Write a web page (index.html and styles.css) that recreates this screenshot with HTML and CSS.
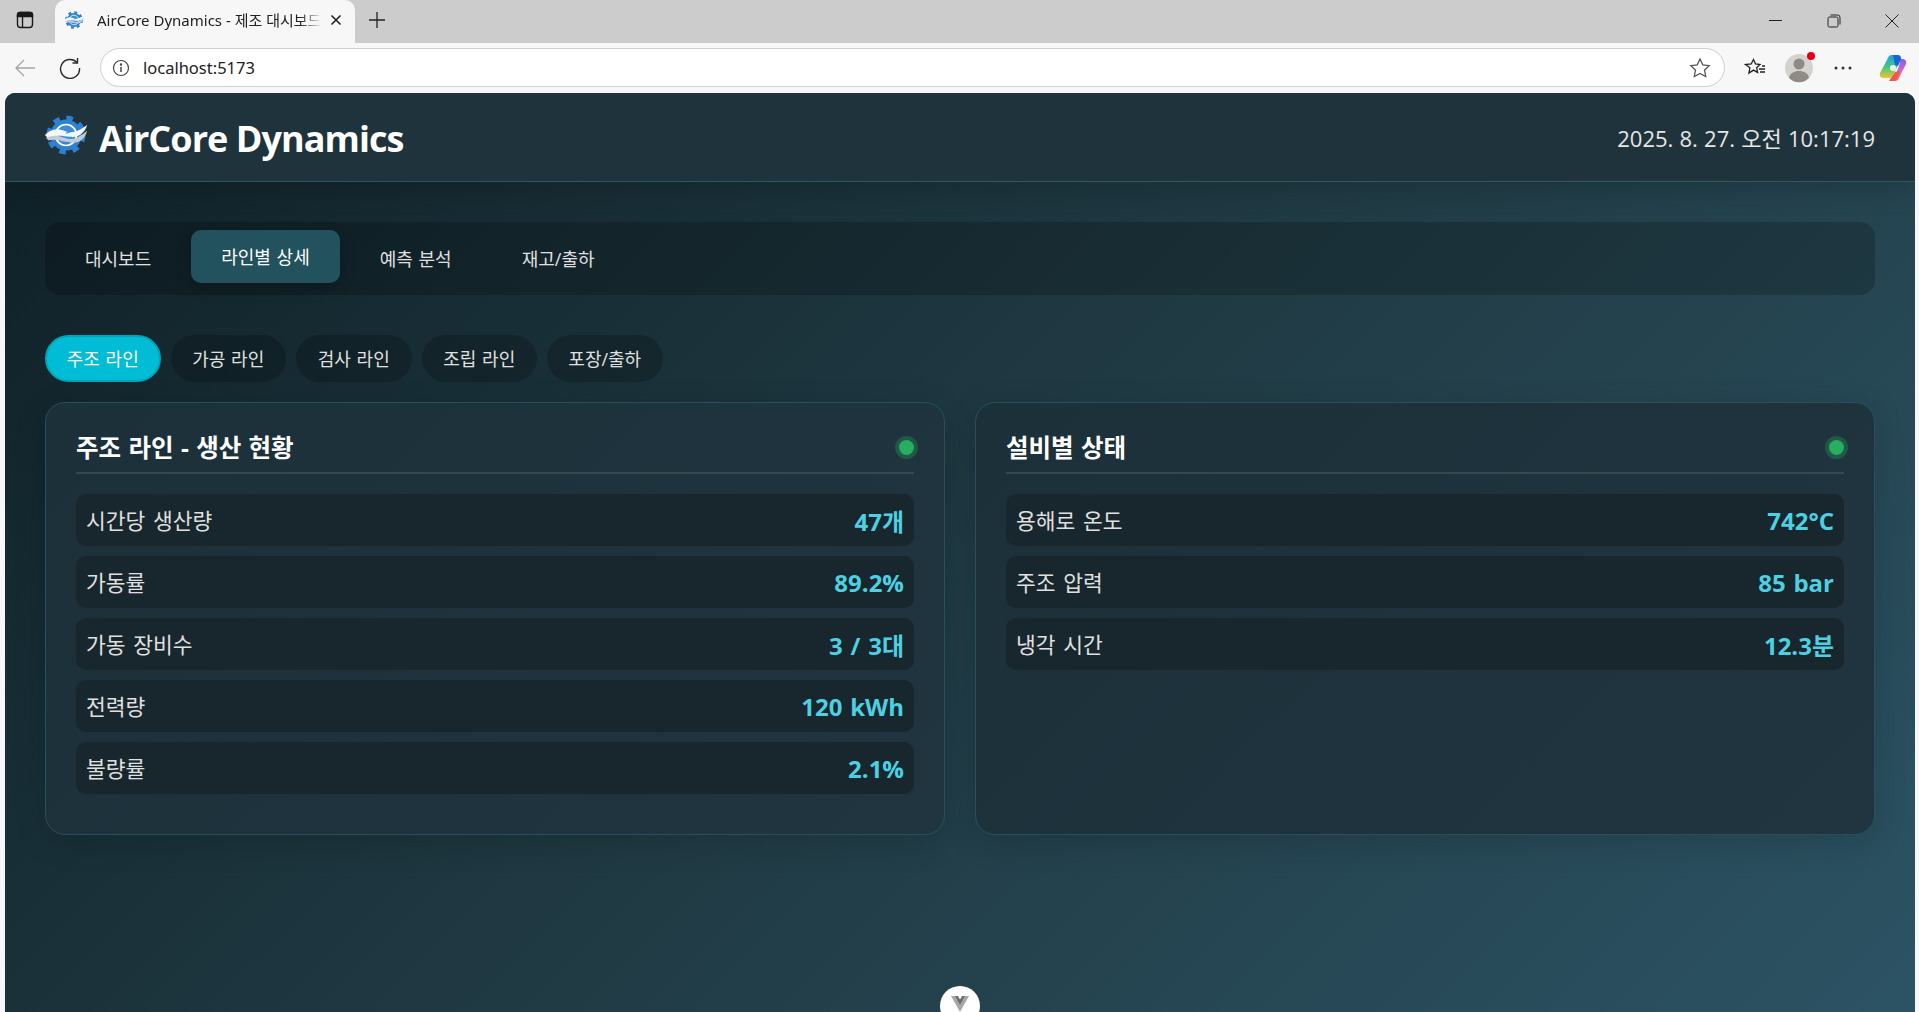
FILE: index.html
```html
<!DOCTYPE html>
<html lang="ko">
<head>
    <meta charset="UTF-8">
    <meta name="viewport" content="width=device-width, initial-scale=1.0">
    <title>AirCore Dynamics - 제조 대시보드</title>
    <link rel="stylesheet" href="styles.css">
</head>
<body>

    <svg class="icon-defs" width="0" height="0">
        <defs>
            <symbol id="aircore-logo" viewBox="0 0 48 48">
                <circle cx="24" cy="24" r="18.5" fill="none" stroke="#2f80d2" stroke-width="5.5" stroke-dasharray="7 7.53"/>
                <circle cx="24" cy="24" r="17" fill="#2f80d2"/>
                <circle cx="24" cy="24" r="11.500" fill="#3d8ed8" stroke="#fff" stroke-width="1.8"/>
                <path d="M1 24c6-6 12-8 20-5s14 3 26-6c-2 8-9 14-18 13S11 23 5 28z" fill="#f4f6f8"/>
                <path d="M2 27c7-3 13-3 20 0s14 2 25-8c-2 10-10 15-20 13S10 28 5 30z" fill="#c3ccd3"/>
                <path d="M24 22l6-2M21 33l6-1" stroke="#2f80d2" stroke-width="1.200" fill="none"/>
            </symbol>
        </defs>
    </svg>

    <!-- browser chrome -->
    <div class="tab-strip">
        <button class="chrome-btn panel-btn">
            <svg width="18" height="18" viewBox="0 0 18 18" fill="none" stroke="#1a1a1a" stroke-width="1.4"><rect x="1.500" y="1.500" width="15" height="15" rx="3"/><path d="M1.500 3.500a2 2 0 0 1 2-2h11a2 2 0 0 1 2 2v2h-15z" fill="#1a1a1a"/><path d="M6.500 5v11"/></svg>
        </button>
        <div class="browser-tab">
            <svg class="favicon" width="20" height="20"><use href="#aircore-logo"/></svg>
            <span class="browser-tab-title">AirCore Dynamics - 제조 대시보드</span>
            <svg width="12" height="12" viewBox="0 0 12 12" stroke="#222" stroke-width="1.6"><path d="M1.500 1.500l9 9M10.500 1.500l-9 9"/></svg>
        </div>
        <button class="chrome-btn new-tab-btn">
            <svg width="18" height="18" viewBox="0 0 18 18" stroke="#222" stroke-width="1.3"><path d="M9 1v16M1 9h16"/></svg>
        </button>
        <div class="window-btns">
            <svg width="14" height="14" viewBox="0 0 14 14" stroke="#222" stroke-width="1"><path d="M0 6.500h13"/></svg>
            <svg width="14" height="14" viewBox="0 0 14 14" fill="none" stroke="#222" stroke-width="1"><rect x="1" y="3" width="10" height="10" rx="1.500"/><path d="M3.500 1h7a2.500 2.500 0 0 1 2.500 2.500v7"/></svg>
            <svg width="14" height="14" viewBox="0 0 14 14" stroke="#222" stroke-width="1"><path d="M.5.5l13 13M13.500.5l-13 13"/></svg>
        </div>
    </div>

    <div class="toolbar">
        <button class="chrome-btn">
            <svg width="22" height="22" viewBox="0 0 22 22" fill="none" stroke="#a5a5a5" stroke-width="1.3"><path d="M21 11H2M10 3l-8 8 8 8"/></svg>
        </button>
        <button class="chrome-btn">
            <svg width="22" height="22" viewBox="0 0 22 22" fill="none" stroke="#2b2b2b" stroke-width="1.4"><path d="M18 5.500A9.500 9.500 0 1 0 20.500 11"/><path d="M18.500 1v5h-5"/></svg>
        </button>
        <div class="address-bar">
            <svg width="18" height="18" viewBox="0 0 18 18" fill="none" stroke="#444" stroke-width="1.2"><circle cx="9" cy="9" r="7.500"/><path d="M9 8v5" stroke-width="1.500"/><circle cx="9" cy="5.500" r=".6" fill="#444"/></svg>
            <span class="address-text">localhost:5173</span>
            <svg class="star" width="22" height="22" viewBox="0 0 22 22" fill="none" stroke="#555" stroke-width="1.3"><path d="M11 2l2.800 5.900 6.400.8-4.700 4.400 1.200 6.400L11 16.400l-5.700 3.100 1.200-6.400L1.800 8.700l6.400-.8z"/></svg>
        </div>
        <div class="toolbar-icons">
            <svg width="22" height="22" viewBox="0 0 22 22" fill="none" stroke="#222" stroke-width="1.3"><path d="M9.500 2.500l2 4.500 4.500.5-3.300 3.200.9 4.700-4.100-2.300-4.600 3 1-5.300L1.500 7.500l5.700-.5zM15 12h6M16 15h5M18 9h3"/></svg>
            <div class="profile">
                <svg width="34" height="34" viewBox="0 0 34 34"><circle cx="17" cy="17" r="14" fill="#d5d3d0"/><circle cx="17" cy="13" r="5.500" fill="#8e8a86"/><path d="M7 27c1-5 5-7 10-7s9 2 10 7a14 14 0 0 1-20 0z" fill="#8e8a86"/></svg>
                <span class="profile-dot"></span>
            </div>
            <svg width="22" height="22" viewBox="0 0 22 22" fill="#333"><circle cx="4" cy="11" r="1.500"/><circle cx="11" cy="11" r="1.500"/><circle cx="18" cy="11" r="1.500"/></svg>
            <svg class="copilot" width="28" height="28" viewBox="0 0 28 28" fill="none">
                <defs>
                    <linearGradient id="copilot-a" x1="0" y1="0" x2="0" y2="1"><stop offset="0" stop-color="#1fa2e8"/><stop offset=".55" stop-color="#48c97a"/><stop offset="1" stop-color="#f4c430"/></linearGradient>
                    <linearGradient id="copilot-b" x1="0" y1="0" x2="0" y2="1"><stop offset="0" stop-color="#8a5ce6"/><stop offset=".6" stop-color="#d66ad0"/><stop offset="1" stop-color="#f8894a"/></linearGradient>
                </defs>
                <path d="M16 1h-3C10 1 9 3 8 6L1 19c-1 3 1 5 4 5h5c3 0 4-2 5-5l4-8z" fill="url(#copilot-a)"/>
                <path d="M12 27h4c3 0 4-2 5-5l6-12c1-3-1-5-4-5h-3c1 2 1 4 0 7l-4 10c-1 3-2 5-4 5z" fill="url(#copilot-b)"/>
                <path d="M14 1h5c2 0 3 1 3 4l-3 7-3-1z" fill="#1666d8"/>
                <path d="M10 27h5c2 0 3-1 4-4l2-6-5 1z" fill="#f0574e"/>
                <circle cx="14" cy="14" r="3" fill="#fff" opacity=".85"/>
            </svg>
        </div>
    </div>

    <!-- app -->
    <div class="app">
        <header class="app-header">
            <div class="brand">
                <svg class="brand-logo" width="44" height="44"><use href="#aircore-logo"/></svg>
                <h1>AirCore Dynamics</h1>
            </div>
            <div class="clock">2025. 8. 27. 오전 10:17:19</div>
        </header>

        <main class="app-main">
            <nav class="main-nav">
                <button class="nav-btn">대시보드</button>
                <button class="nav-btn active">라인별 상세</button>
                <button class="nav-btn">예측 분석</button>
                <button class="nav-btn">재고/출하</button>
            </nav>

            <div class="line-tabs">
                <button class="line-tab active">주조 라인</button>
                <button class="line-tab">가공 라인</button>
                <button class="line-tab">검사 라인</button>
                <button class="line-tab">조립 라인</button>
                <button class="line-tab">포장/출하</button>
            </div>

            <div class="card-grid">
                <section class="card">
                    <div class="card-header">
                        <h2>주조 라인 - 생산 현황</h2>
                        <span class="status-dot"></span>
                    </div>
                    <div class="metric-list">
                        <div class="metric"><span class="metric-label">시간당 생산량</span><span class="metric-value">47개</span></div>
                        <div class="metric"><span class="metric-label">가동률</span><span class="metric-value">89.2%</span></div>
                        <div class="metric"><span class="metric-label">가동 장비수</span><span class="metric-value">3 / 3대</span></div>
                        <div class="metric"><span class="metric-label">전력량</span><span class="metric-value">120 kWh</span></div>
                        <div class="metric"><span class="metric-label">불량률</span><span class="metric-value">2.1%</span></div>
                    </div>
                </section>

                <section class="card">
                    <div class="card-header">
                        <h2>설비별 상태</h2>
                        <span class="status-dot"></span>
                    </div>
                    <div class="metric-list">
                        <div class="metric"><span class="metric-label">용해로 온도</span><span class="metric-value">742°C</span></div>
                        <div class="metric"><span class="metric-label">주조 압력</span><span class="metric-value">85 bar</span></div>
                        <div class="metric"><span class="metric-label">냉각 시간</span><span class="metric-value">12.3분</span></div>
                    </div>
                </section>
            </div>
        </main>

        <button class="devtools-toggle">
            <svg width="18" height="16" viewBox="0 0 18 16"><path d="M0 0h6l3 5 3-5h6L9 16z" fill="#a8a8a8"/><path d="M4 0h3l2 3.500L11 0h3L9 9z" fill="#6f6f6f"/></svg>
        </button>
    </div>

</body>
</html>
```

FILE: styles.css
```css
/* General styling */
html, body {
    margin: 0;
    padding: 0;
    height: 100%;
    overflow: hidden;
}

body {
    display: flex;
    flex-direction: column;
    background: #f7f7f7;
    font-family: "Open Sans", "Noto Sans CJK KR", sans-serif;
}

button {
    font-family: inherit;
    border: none;
    cursor: pointer;
}

.icon-defs {
    position: absolute;
}

/* Browser chrome */
.tab-strip {
    display: flex;
    align-items: flex-end;
    flex: 0 0 43px;
    background: #cccccc;
}

.chrome-btn {
    display: flex;
    align-items: center;
    justify-content: center;
    padding: 0;
    background: none;
}

.panel-btn {
    width: 50px;
    height: 40px;
    margin-right: 5px;
    align-self: flex-start;
}

.browser-tab {
    display: flex;
    align-items: center;
    box-sizing: border-box;
    width: 300px;
    height: 43px;
    padding: 0 13px 4px 9px;
    background: #f7f7f7;
    border-radius: 10px 10px 0 0;
}

.favicon {
    flex: none;
}

.browser-tab-title {
    flex: 1;
    margin-left: 13px;
    margin-right: 8px;
    font-family: "Noto Sans", "Noto Sans CJK KR", sans-serif;
    font-size: 15px;
    color: #222;
    white-space: nowrap;
    overflow: hidden;
    -webkit-mask-image: linear-gradient(to right, #000 90%, transparent);
    mask-image: linear-gradient(to right, #000 90%, transparent);
}

.new-tab-btn {
    width: 42px;
    height: 40px;
    margin-left: 1px;
    align-self: flex-start;
}

.window-btns {
    display: flex;
    align-items: center;
    gap: 44px;
    height: 42px;
    margin-left: auto;
    padding-right: 20px;
    align-self: flex-start;
}

.toolbar {
    display: flex;
    align-items: center;
    flex: 0 0 50px;
    box-sizing: border-box;
    padding: 0 0 1px 14px;
    background: #f7f7f7;
}

.toolbar .chrome-btn {
    width: 22px;
    height: 22px;
    margin-right: 23px;
}

.address-bar {
    display: flex;
    align-items: center;
    flex: none;
    box-sizing: border-box;
    width: 1625px;
    height: 39px;
    margin-left: -4px;
    padding: 0 13px 0 11px;
    background: #fff;
    border: 1px solid #cfcfcf;
    border-radius: 20px;
}

.address-text {
    margin-left: 13px;
    font-family: "Noto Sans", sans-serif;
    font-size: 16.5px;
    color: #222;
}

.star {
    margin-left: auto;
}

.toolbar-icons {
    display: flex;
    align-items: center;
    flex: 1;
    gap: 16px;
    padding-left: 19px;
}

.copilot {
    margin-left: 9px;
}

.profile {
    position: relative;
    width: 34px;
    height: 34px;
}

.profile-dot {
    position: absolute;
    top: 1px;
    right: 1px;
    width: 8px;
    height: 8px;
    background: #e60012;
    border-radius: 50%;
}

/* App frame */
.app {
    position: relative;
    flex: 1;
    display: flex;
    flex-direction: column;
    min-height: 0;
    margin: 0 4px 0 5px;
    border-radius: 10px 10px 0 0;
    overflow: hidden;
    color: #fff;
    background: linear-gradient(135deg, #0f2027 0%, #203a43 50%, #2c5364 100%);
}

.app-header {
    display: flex;
    align-items: center;
    justify-content: space-between;
    box-sizing: border-box;
    flex: 0 0 89px;
    padding: 0 40px;
    background: #1f333d;
    border-bottom: 1px solid #2a5a66;
    box-shadow: 0 4px 30px rgba(0, 0, 0, 0.2);
}

.brand {
    display: flex;
    align-items: center;
    gap: 11px;
}

.brand-logo {
    margin-top: -4px;
    margin-left: -1px;
}

.brand h1 {
    margin: 2px 0 0;
    font-size: 36px;
    font-weight: 700;
    letter-spacing: -0.95px;
}

.clock {
    font-size: 22px;
    word-spacing: 0.5px;
    color: #e6e6e6;
}

.app-main {
    padding: 40px 40px 0;
}

/* Main navigation */
.main-nav {
    display: flex;
    gap: 10px;
    padding: 10px;
    margin-bottom: 40px;
    background: rgba(0, 0, 0, 0.2);
    border-radius: 15px;
}

.nav-btn {
    height: 53px;
    padding: 0 30px 2px;
    font-size: 18px;
    word-spacing: 1px;
    font-weight: 400;
    color: #e0e0e0;
    background: transparent;
    border-radius: 10px;
}

.nav-btn.active {
    color: #fff;
    background: #22525e;
    transform: translateY(-2px);
    box-shadow: 0 5px 15px rgba(0, 0, 0, 0.2);
}

/* Line tabs */
.line-tabs {
    display: flex;
    gap: 10px;
    margin-bottom: 20px;
}

.line-tab {
    box-sizing: border-box;
    width: 115.500px;
    height: 47px;
    padding: 0 0 2px;
    font-size: 18px;
    word-spacing: 1px;
    color: #e0e0e0;
    background: rgba(0, 0, 0, 0.2);
    border: 2px solid transparent;
    border-radius: 25px;
}

.line-tab.active {
    color: #fff;
    background: #00bcd4;
    border-color: #00a4b9;
}

/* Cards */
.card-grid {
    display: grid;
    grid-template-columns: 1fr 1fr;
    gap: 30px;
}

.card {
    padding: 30px;
    background: linear-gradient(135deg, #1c303a, #20353f);
    border: 1px solid #27505d;
    border-radius: 20px;
    box-shadow: 0 8px 32px rgba(0, 0, 0, 0.15);
}

.card-header {
    display: flex;
    align-items: center;
    justify-content: space-between;
    box-sizing: border-box;
    height: 41px;
    margin-bottom: 20px;
    border-bottom: 2px solid #36474f;
}

.card-header h2 {
    margin: 0 0 9px;
    font-size: 24.500px;
    font-weight: 700;
    line-height: 32px;
    word-spacing: 1px;
}

.status-dot {
    width: 15px;
    height: 15px;
    margin: 0 0 10px;
    background: #27ae60;
    border-radius: 50%;
    box-shadow: 0 0 0 4px rgba(39, 174, 96, 0.3);
}

.metric-list {
    display: flex;
    flex-direction: column;
    gap: 10px;
    padding-bottom: 10px;
}

.metric {
    display: flex;
    align-items: center;
    justify-content: space-between;
    height: 52px;
    padding: 0 10px;
    background: #18262d;
    border-radius: 10px;
}

.metric-label {
    padding-bottom: 2px;
    font-size: 21.500px;
    word-spacing: 2px;
    color: #e0e0e0;
}

.metric-value {
    font-size: 24px;
    font-weight: 700;
    word-spacing: 1.500px;
    color: #4dd0e1;
}

/* Dev tools toggle */
.devtools-toggle {
    position: absolute;
    left: 935px;
    top: 893px;
    display: flex;
    justify-content: center;
    width: 40px;
    height: 40px;
    padding: 10px 0 0;
    background: #fff;
    border-radius: 50%;
}
```
